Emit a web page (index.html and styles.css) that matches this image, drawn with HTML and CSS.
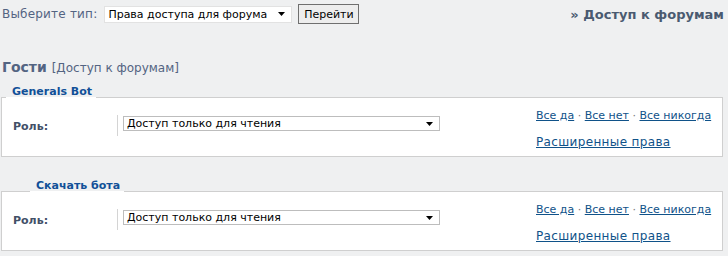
FILE: index.html
```html
<!DOCTYPE html>
<html lang="ru">
<head>
    <meta charset="UTF-8">
    <title>Доступ к форумам</title>
    <link rel="stylesheet" href="styles.css">
</head>
<body>
<div class="top-bar">
    <form class="type-form">
        <label for="type" class="type-label">Выберите тип:</label>
        <select id="type" class="type-select">
            <option>Права доступа для форума</option>
        </select>
        <button type="button" class="go-button">Перейти</button>
    </form>
    <div class="crumb">&raquo; Доступ к форумам</div>
</div>

<h3 class="group-title">Гости <span class="group-sub">[Доступ к форумам]</span></h3>

<fieldset class="perm">
    <legend class="perm-legend">Generals Bot</legend>
    <div class="perm-row">
        <div class="perm-label">Роль:</div>
        <div class="perm-value">
            <select class="role-select">
                <option>Доступ только для чтения</option>
            </select>
        </div>
        <div class="perm-links">
            <div class="quick"><a href="#">Все да</a> &middot; <a href="#">Все нет</a> &middot; <a href="#">Все никогда</a></div>
            <div class="advanced"><a href="#">Расширенные права</a></div>
        </div>
    </div>
</fieldset>

<fieldset class="perm second">
    <legend class="perm-legend">Скачать бота</legend>
    <div class="perm-row">
        <div class="perm-label">Роль:</div>
        <div class="perm-value">
            <select class="role-select">
                <option>Доступ только для чтения</option>
            </select>
        </div>
        <div class="perm-links">
            <div class="quick"><a href="#">Все да</a> &middot; <a href="#">Все нет</a> &middot; <a href="#">Все никогда</a></div>
            <div class="advanced"><a href="#">Расширенные права</a></div>
        </div>
    </div>
</fieldset>
</body>
</html>
```

FILE: styles.css
```css
body {
    margin: 0;
    background-color: #eff0f1;
    font-family: "DejaVu Sans", Verdana, sans-serif;
    font-size: 11px;
    color: #333;
}

.top-bar {
    display: flex;
    justify-content: space-between;
    align-items: center;
    height: 28px;
    padding: 0 4px 0 2px;
}

.type-form {
    display: flex;
    align-items: center;
}

.type-label {
    color: #536482;
    font-size: 12px;
    letter-spacing: 0.2px;
    margin-right: 7px;
}

/* selects get a small solid arrow like the old theme */
.type-select,
.role-select {
    appearance: none;
    -webkit-appearance: none;
    font-family: inherit;
    font-size: 11px;
    color: #000;
    background: #fff url("data:image/svg+xml,%3Csvg xmlns='http://www.w3.org/2000/svg' width='7' height='4'%3E%3Cpath d='M0 0h7L3.5 4z' fill='%23000'/%3E%3C/svg%3E") no-repeat right 6px center;
    padding: 0 0 0 3px;
    border-radius: 0;
}

.type-select {
    width: 188px;
    height: 17px;
    border: 1px solid #e2e2e2;
}

.go-button {
    margin-left: 6px;
    height: 20px;
    width: 61px;
    padding: 0;
    font-family: inherit;
    font-size: 11px;
    border: 1px solid #6f6f6f;
    border-radius: 0;
    background: #ededed;
    color: #000;
}

.crumb {
    font-weight: bold;
    font-size: 13px;
    color: #4a5a70;
}

.group-title {
    margin: 31px 0 9px 2px;
    line-height: 16px;
    font-size: 14px;
    font-weight: bold;
    color: #536482;
}

.group-sub {
    font-size: 12px;
    font-weight: normal;
}

.perm {
    margin: 0 5px 0 1px;
    padding: 0;
    border: 1px solid #cfcfcf;
    background: #fff;
    min-width: 0;
}

.perm-legend {
    margin-left: 4px;
    padding: 0 4px 10px 6px;
    line-height: 14px;
    font-weight: bold;
    font-size: 11px;
    color: #115098;
}

.second {
    margin-top: 22px;
}

.second .perm-legend {
    margin-left: 28px;
}

.perm-row {
    display: flex;
    align-items: flex-start;
    padding-bottom: 6px;
}

.perm-label {
    width: 104px;
    padding: 11px 0 0 11px;
    line-height: 13px;
    font-weight: bold;
    color: #425067;
}

.perm-value {
    width: 413px;
    margin-top: 6px;
    padding: 1px 0 5px 5px;
    border-left: 1px solid #d4d4d4;
}

.role-select {
    display: block;
    width: 317px;
    height: 15px;
    border: 1px solid #bdbdbd;
}

.perm-links {
    color: #777;
}

.perm-links a {
    color: #105289;
    text-decoration: underline;
}

.quick {
    font-size: 11px;
    line-height: 13px;
}

.advanced {
    margin-top: 13px;
    line-height: 15px;
    font-size: 12px;
    letter-spacing: 0.35px;
}
```
